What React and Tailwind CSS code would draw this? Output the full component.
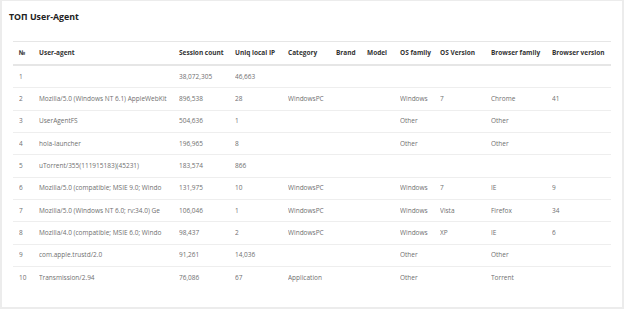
import React from "react";

const cols = [
  { key: "n", label: "№", w: "w-[20px]" },
  { key: "ua", label: "User-agent", w: "w-[140px]" },
  { key: "sc", label: "Session count", w: "w-[56px]" },
  { key: "ip", label: "Uniq local IP", w: "w-[53px]" },
  { key: "cat", label: "Category", w: "w-[48px]" },
  { key: "brand", label: "Brand", w: "w-[31px]" },
  { key: "model", label: "Model", w: "w-[33px]" },
  { key: "os", label: "OS family", w: "w-[40px]" },
  { key: "osv", label: "OS Version", w: "w-[51px]" },
  { key: "bf", label: "Browser family", w: "w-[61px]" },
  { key: "bv", label: "Browser version", w: "w-[65px]" },
];

const rows = [
  ["1", "", "38,072,305", "46,663", "", "", "", "", "", "", ""],
  ["2", "Mozilla/5.0 (Windows NT 6.1) AppleWebKit", "896,538", "28", "WindowsPC", "", "", "Windows", "7", "Chrome", "41"],
  ["3", "UserAgentFS", "504,636", "1", "", "", "", "Other", "", "Other", ""],
  ["4", "hola-launcher", "196,965", "8", "", "", "", "Other", "", "Other", ""],
  ["5", "uTorrent/355(111915183)(45231)", "183,574", "866", "", "", "", "", "", "", ""],
  ["6", "Mozilla/5.0 (compatible; MSIE 9.0; Windo", "131,975", "10", "WindowsPC", "", "", "Windows", "7", "IE", "9"],
  ["7", "Mozilla/5.0 (Windows NT 6.0; rv:34.0) Ge", "106,046", "1", "WindowsPC", "", "", "Windows", "Vista", "Firefox", "34"],
  ["8", "Mozilla/4.0 (compatible; MSIE 6.0; Windo", "98,437", "2", "WindowsPC", "", "", "Windows", "XP", "IE", "6"],
  ["9", "com.apple.trustd/2.0", "91,261", "14,036", "", "", "", "Other", "", "Other", ""],
  ["10", "Transmission/2.94", "76,086", "67", "Application", "", "", "Other", "", "Torrent", ""],
];

export default function App() {
  return (
    <div
      className="w-[624px] h-[309px] bg-white border-t border-l-2 border-r-2 border-b-2 border-[#ececec] overflow-hidden"
      style={{ fontFamily: '"Open Sans", "Noto Sans", sans-serif' }}
    >
      <div className="pl-[7px] pt-[10px] h-[40px] text-[8.8px] font-bold text-[#222]">ТОП User-Agent</div>
      <div className="ml-[11px] w-[598px]">
        <div className="flex h-[25px] items-center border-t border-b-2 border-[#e6e6e6] text-[6.5px] font-bold text-[#333]">
          {cols.map((c) => (
            <div key={c.key} className={`${c.w} shrink-0 pl-[6px] whitespace-nowrap`}>
              {c.label}
            </div>
          ))}
        </div>
        {rows.map((r, i) => (
          <div
            key={i}
            className={`flex h-[22.33px] items-center text-[6.5px] text-[#6f6f6f] ${i < rows.length - 1 ? "border-b border-[#eeeeee]" : ""}`}
          >
            {r.map((v, j) => (
              <div key={j} className={`${cols[j].w} shrink-0 pl-[6px] ${j === 1 ? "pr-[6px]" : ""}`}>
                <div className="whitespace-nowrap overflow-hidden">{v}</div>
              </div>
            ))}
          </div>
        ))}
      </div>
    </div>
  );
}
